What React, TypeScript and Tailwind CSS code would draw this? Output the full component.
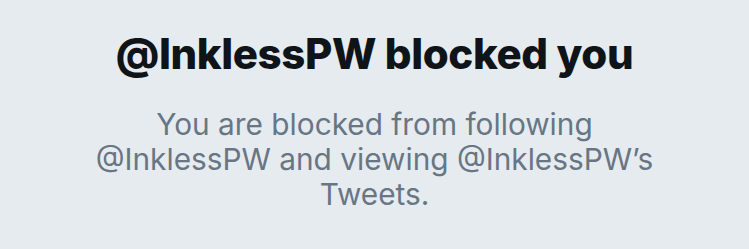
export default function App() {
  return (
    <div className="w-[749px] h-[249px] bg-[#e6ebf0] flex flex-col items-center pt-[29px]" style={{ fontFamily: "Inter, 'Noto Sans', sans-serif" }}>
      <h1 className="text-[42px] leading-[50px] font-extrabold text-[#0f1419] tracking-[-0.4px]">
        @InklessPW blocked you
      </h1>
      <p className="mt-[28px] w-[590px] text-center text-[29.8px] leading-[35px] text-[#687684]">
        You are blocked from following @InklessPW and viewing @InklessPW’s Tweets.
      </p>
    </div>
  );
}
